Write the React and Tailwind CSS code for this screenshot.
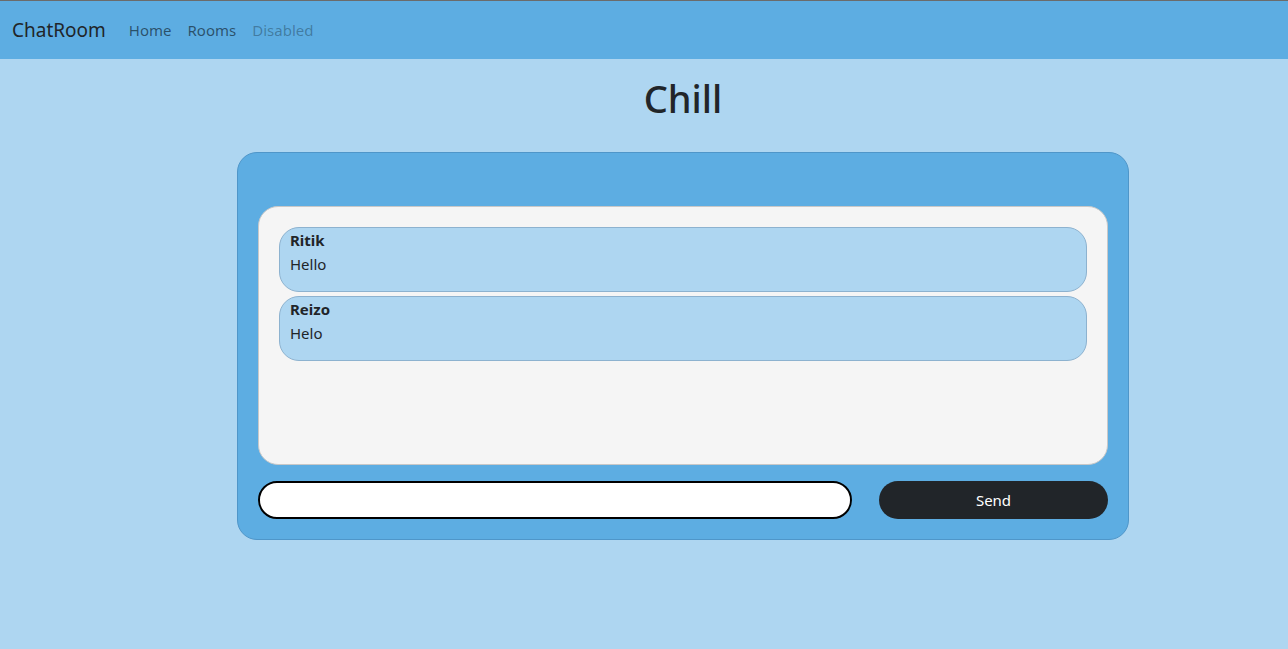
export default function App() {
  return (
    <div
      className="min-h-screen bg-[#aed6f1] text-[#212529]"
      style={{ fontFamily: '"Noto Sans", "Open Sans", sans-serif' }}
    >
      <div className="h-px bg-[#6b6b6b]" />
      <nav className="h-[58px] bg-[#5dade2] flex items-center px-3">
        <span className="text-[19px] leading-[30px] text-[#212529] mr-[15px]">ChatRoom</span>
        <a className="text-[15px] px-2 text-black/55">Home</a>
        <a className="text-[15px] px-2 text-black/55">Rooms</a>
        <a className="text-[15px] px-2 text-black/30">Disabled</a>
      </nav>
      <div className="ml-[237px] w-[892px]">
        <h1 className="text-center text-[38px] leading-[48px] font-medium mt-[15px]">Chill</h1>
        <div className="mt-[30px] bg-[#5dade2] border border-[#4f96c9] rounded-[20px] px-5 pb-5 pt-[53px]">
          <div className="h-[259px] bg-[#f5f5f5] border border-[#c8c8c8] rounded-[20px] p-5 flex flex-col gap-1">
            {[
              ["Ritik", "Hello"],
              ["Reizo", "Helo"],
            ].map(([n, m]) => (
              <div key={n} className="bg-[#aed6f1] border border-[#8db2cf] rounded-[20px] px-[10px] pb-[15px] text-[15px] leading-6">
                <div className="font-bold">{n}</div>
                <div>{m}</div>
              </div>
            ))}
          </div>
          <div className="mt-4 flex items-center gap-[27px]">
            <input className="h-[38px] w-[594px] bg-white border-2 border-black rounded-full px-3 outline-none" />
            <button className="h-[38px] flex-1 bg-[#212529] text-white rounded-full text-[15px]">Send</button>
          </div>
        </div>
      </div>
    </div>
  );
}
